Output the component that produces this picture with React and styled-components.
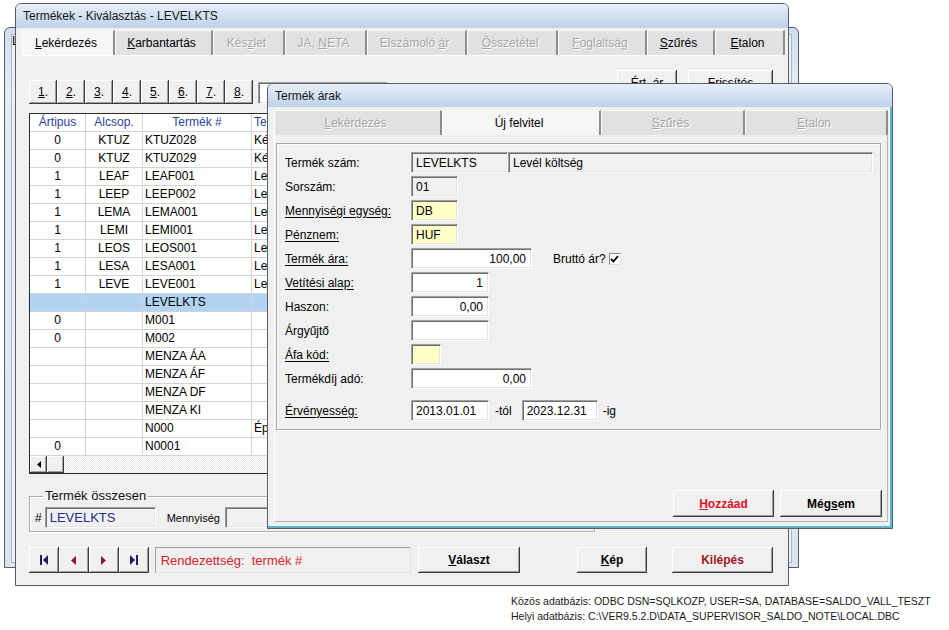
import React from "react";
import styled, { createGlobalStyle, css } from "styled-components";

const GlobalStyle = createGlobalStyle`
  html, body { margin: 0; padding: 0; background: #fff; }
  body { font-family: "Liberation Sans", Arial, sans-serif; font-size: 12px; color: #000; }
  * { box-sizing: border-box; }
`;

const raised = css`
  background: #f0f0f0;
  border: none;
  box-shadow: inset -1px -1px 0 #3c3c3c, inset 1px 1px 0 #fff, inset -2px -2px 0 #a0a0a0;
`;

const sunken = css`
  border: 1px solid;
  border-color: #a0a0a0 #fff #fff #a0a0a0;
  box-shadow: inset 1px 1px 0 #6e6e6e, inset -1px -1px 0 #e3e3e3;
`;

const Desktop = styled.div`
  position: relative;
  width: 949px;
  height: 630px;
  overflow: hidden;
  padding: 594px 0 0 511px;
`;

const Footer = styled.div`
  font-size: 10.5px;
  line-height: 15px;
  color: #1a1a1a;
  white-space: nowrap;
`;

const Win = styled.div`
  position: absolute;
  left: ${(p) => p.$x}px;
  top: ${(p) => p.$y}px;
  width: ${(p) => p.$w}px;
  height: ${(p) => p.$h}px;
  border: 1px solid #545e6c;
  border-radius: 6px 6px 0 0;
  background: #f0f0f0;
  display: flex;
  flex-direction: column;
  overflow: hidden;
  box-shadow: ${(p) => (p.$accent ? "inset -2px -2px 0 #5bb6cd" : "none")};
`;

const BackWin = styled(Win)`
  background: linear-gradient(#cfdeef, #e4ecf6 60px, #dbe5f1);
  padding: 6px 6px 4px 6px;
`;

const BackBody = styled.div`
  flex: 1;
  background: #f0f0f0;
  border: 1px solid #a9b7c9;
  overflow: hidden;
`;

const BackTab = styled.div`
  width: 4px;
  height: 20px;
  overflow: hidden;
  line-height: 12px;
  font-size: 12px;
`;

const Caption = styled.div`
  flex: none;
  height: ${(p) => p.$h}px;
  display: flex;
  align-items: center;
  padding-left: ${(p) => p.$pad}px;
  background: linear-gradient(#e7eff9, #bed2eb);
  font-size: 12px;
  color: #151515;
`;

const U = styled.span`
  text-decoration: underline;
`;

const TabStrip = styled.div`
  display: flex;
  height: 25px;
  flex: none;
`;

const Tab = styled.div`
  flex: none;
  width: ${(p) => p.$w}px;
  height: 100%;
  display: flex;
  align-items: center;
  justify-content: center;
  padding-right: 4px;
  background: ${(p) => (p.$active ? "#f6f6f6" : "#e1e1e1")};
  border-left: 1px solid #fff;
  border-right: 2px solid #8d8d8d;
  border-top: 1px solid #fafafa;
  color: ${(p) => (p.$off ? "#a6a6a6" : "#000")};
  text-shadow: ${(p) => (p.$off ? "1px 1px 0 #fff" : "none")};
  font-size: 12px;
  white-space: pre;
`;

/* ---------- main window ---------- */

const MainBody = styled.div`
  flex: 1;
  display: flex;
  flex-direction: column;
  padding: 2px 2px 0 6px;
`;

const MainPage = styled.div`
  flex: 1;
  display: flex;
  flex-direction: column;
  padding: 15px 13px 0 7px;
  box-shadow: inset 0 1px 0 #fff;
`;

const Toolbar = styled.div`
  display: flex;
  align-items: flex-start;
  height: 34px;
`;

const NumGroup = styled.div`
  display: flex;
  margin-top: 10px;
`;

const NumBtn = styled.div`
  ${raised};
  width: 28px;
  height: 24px;
  display: flex;
  align-items: center;
  justify-content: center;
`;

const SearchField = styled.div`
  ${sunken};
  width: 130px;
  height: 22px;
  margin: 12px 0 0 5px;
  background: #fff;
`;

const PushBtn = styled.div`
  ${raised};
  flex: none;
  width: ${(p) => p.$w}px;
  height: ${(p) => p.$h || 26}px;
  margin-left: ${(p) => p.$ml || "0px"};
  display: flex;
  align-items: center;
  justify-content: center;
  font-size: 12px;
  font-weight: ${(p) => (p.$bold ? 700 : 400)};
  color: ${(p) => p.$color || "#000"};
`;

const Table = styled.div`
  margin-top: 9px;
  border: 1px solid #2a2a2a;
  background: #fff;
  display: flex;
  flex-direction: column;
`;

const Row = styled.div`
  display: grid;
  grid-template-columns: 56px 57px 109px 1fr;
  height: 18px;
  background: ${(p) => (p.$sel ? "#b1d4f3" : "#fff")};
`;

const Cell = styled.div`
  border-right: 1px solid #d3d3d3;
  border-bottom: 1px solid #d3d3d3;
  padding: 0 2px;
  line-height: 17px;
  text-align: ${(p) => p.$align || "left"};
  color: ${(p) => (p.$head ? "#2b3f9e" : "#000")};
  white-space: nowrap;
  overflow: hidden;
`;

const HScroll = styled.div`
  display: flex;
  height: 17px;
`;

const ScrollBtn = styled.div`
  ${raised};
  width: 17px;
  height: 17px;
  display: flex;
  align-items: center;
  justify-content: center;
`;

const ScrollTrack = styled.div`
  flex: 1;
  background-color: #fff;
  background-image: repeating-conic-gradient(#e4e4e4 0 25%, #fff 0 50%);
  background-size: 2px 2px;
`;

const Group = styled.fieldset`
  margin: 15px 0 0;
  width: 566px;
  min-width: 0;
  padding: 4px 5px 3px;
  border: 1px solid #ababab;
  box-shadow: inset 1px 1px 0 #fff, 1px 1px 0 #fff;
  display: flex;
  align-items: center;

  legend {
    padding: 0 2px;
    margin-left: 8px;
    font-size: 13px;
    line-height: 14px;
    color: #111;
  }
`;

const Hash = styled.span`
  font-size: 12px;
  margin-right: 3px;
`;

const Small = styled.span`
  font-size: 11px;
  margin: 0 5px 0 11px;
`;

const Field = styled.div`
  ${sunken};
  flex: none;
  width: ${(p) => p.$w}px;
  height: 21px;
  background: ${(p) =>
    p.$tone === "yellow" ? "#ffffc6" : p.$tone === "gray" ? "#f1f1f1" : "#fff"};
  padding: 0 5px 0 4px;
  display: flex;
  align-items: center;
  justify-content: ${(p) => (p.$right ? "flex-end" : "flex-start")};
  font-size: ${(p) => p.$fs || 12}px;
  color: ${(p) => p.$color || "#000"};
  white-space: nowrap;
  overflow: hidden;
`;

const BottomBar = styled.div`
  display: flex;
  align-items: center;
  height: 26px;
  margin-top: 15px;
`;

const NavBtn = styled.div`
  ${raised};
  width: 30px;
  height: 26px;
  display: flex;
  align-items: center;
  justify-content: center;
`;

const Status = styled.div`
  border: 1px solid;
  border-color: #a0a0a0 #e2e2e2 #e2e2e2 #a0a0a0;
  width: 257px;
  height: 26px;
  margin-left: 6px;
  padding-left: 5px;
  display: flex;
  align-items: center;
  color: #d51f2a;
  font-size: 13px;
  white-space: pre;
`;

/* ---------- dialog ---------- */

const DlgBody = styled.div`
  flex: 1;
  display: flex;
  flex-direction: column;
  padding: 3px 4px 6px 6px;
`;

const DlgPage = styled.div`
  flex: 1;
  display: flex;
  flex-direction: column;
  padding: 8px 5px 4px 2px;
  border-right: 1px solid #b6b6b6;
  border-bottom: 1px solid #b6b6b6;
  box-shadow: inset 1px 0 0 #fff;
`;

const FormBox = styled.div`
  width: 605px;
  border: 1px solid #a6a6a6;
  box-shadow: inset 1px 1px 0 #fff, 1px 1px 0 #fff;
  padding: 8px 0 8px 8px;
  display: flex;
  flex-direction: column;
  gap: 3px;
`;

const FormRow = styled.div`
  display: flex;
  align-items: center;
  height: 21px;
  margin-top: ${(p) => p.$mt || 0}px;
`;

const FLabel = styled.span`
  flex: none;
  width: 126px;
  font-size: 12px;
  text-decoration: ${(p) => (p.$ul ? "underline" : "none")};
  text-underline-offset: 2px;
`;

const Side = styled.span`
  font-size: 12px;
  margin: ${(p) => p.$m};
`;

const Check = styled.span`
  width: 12px;
  height: 12px;
  margin-left: 3px;
  background: #fff;
  border: 1px solid;
  border-color: #8a8a8a #e0e0e0 #e0e0e0 #8a8a8a;
  display: flex;
  align-items: center;
  justify-content: center;
`;

const DlgButtons = styled.div`
  display: flex;
  justify-content: flex-end;
  gap: 6px;
  margin-top: 60px;
`;

/* ---------- data ---------- */

const mainTabs = [
  ["", "L", "ekérdezés", 93, true, false],
  ["", "K", "arbantartás", 98, false, false],
  ["Kés", "z", "let", 72, false, true],
  ["JA, ", "N", "ETA", 82, false, true],
  ["Elszámoló ", "á", "r", 100, false, true],
  ["", "Ö", "sszetétel", 91, false, true],
  ["", "F", "oglaltság", 89, false, true],
  ["", "S", "zűrés", 68, false, false],
  ["", "E", "talon", 70, false, false],
];

const dlgTabs = [
  ["", "L", "ekérdezés", 168, false, true],
  ["", "", "Új felvitel", 159, true, false],
  ["", "S", "zűrés", 144, false, true],
  ["", "E", "talon", 143, false, true],
];

// the name column lies under the dialog, only its first letters show
const rows = [
  ["0", "KTUZ", "KTUZ028", "Kézi"],
  ["0", "KTUZ", "KTUZ029", "Kézi"],
  ["1", "LEAF", "LEAF001", "Lev."],
  ["1", "LEEP", "LEEP002", "Lev."],
  ["1", "LEMA", "LEMA001", "Lev."],
  ["1", "LEMI", "LEMI001", "Lev."],
  ["1", "LEOS", "LEOS001", "Lev."],
  ["1", "LESA", "LESA001", "Lev."],
  ["1", "LEVE", "LEVE001", "Lev."],
  ["", "", "LEVELKTS", "", true],
  ["0", "", "M001", ""],
  ["0", "", "M002", ""],
  ["", "", "MENZA ÁA", ""],
  ["", "", "MENZA ÁF", ""],
  ["", "", "MENZA DF", ""],
  ["", "", "MENZA KI", ""],
  ["", "", "N000", "Épít"],
  ["0", "", "N0001", ""],
];

const renderTabs = (tabs) =>
  tabs.map(([pre, k, post, w, active, off]) => (
    <Tab key={pre + k + post} $w={w} $active={active} $off={off}>
      {pre}
      {k && <U>{k}</U>}
      {post}
    </Tab>
  ));

const NAVY = "#221d66";
const WINE = "#921427";

const FirstIcon = () => (
  <svg width="8" height="10" viewBox="0 0 8 10">
    <rect x="0" y="0" width="2" height="10" fill={NAVY} />
    <path d="M8 0 L3 5 L8 10Z" fill={NAVY} />
  </svg>
);
const PrevIcon = () => (
  <svg width="5" height="9" viewBox="0 0 5 9">
    <path d="M5 0 L0 4.5 L5 9Z" fill={WINE} />
  </svg>
);
const NextIcon = () => (
  <svg width="5" height="9" viewBox="0 0 5 9">
    <path d="M0 0 L5 4.5 L0 9Z" fill={WINE} />
  </svg>
);
const LastIcon = () => (
  <svg width="8" height="10" viewBox="0 0 8 10">
    <path d="M0 0 L5 5 L0 10Z" fill={NAVY} />
    <rect x="6" y="0" width="2" height="10" fill={NAVY} />
  </svg>
);

export default function App() {
  return (
    <>
      <GlobalStyle />
      <Desktop>
        <BackWin $x={4} $y={27} $w={795} $h={541}>
          <BackBody>
            <BackTab>L</BackTab>
          </BackBody>
        </BackWin>

        <Win $x={15} $y={3} $w={774} $h={583}>
          <Caption $h={24} $pad={7}>Termékek - Kiválasztás - LEVELKTS</Caption>
          <MainBody>
            <TabStrip>{renderTabs(mainTabs)}</TabStrip>
            <MainPage>
              <Toolbar>
                <NumGroup>
                  {[1, 2, 3, 4, 5, 6, 7, 8].map((n) => (
                    <NumBtn key={n}>
                      <U>{n}</U>.
                    </NumBtn>
                  ))}
                </NumGroup>
                <SearchField />
                <PushBtn $w={60} $ml="auto">
                  Ért. ár
                </PushBtn>
                <PushBtn $w={85} $ml="11px">
                  Frissítés
                </PushBtn>
              </Toolbar>

              <Table>
                <Row>
                  <Cell $head $align="center">Ártipus</Cell>
                  <Cell $head $align="center">Alcsop.</Cell>
                  <Cell $head $align="center">Termék #</Cell>
                  <Cell $head>Termék neve</Cell>
                </Row>
                {rows.map((r, i) => (
                  <Row key={i} $sel={r[4]}>
                    <Cell $align="center">{r[0]}</Cell>
                    <Cell $align="center">{r[1]}</Cell>
                    <Cell>{r[2]}</Cell>
                    <Cell>{r[3]}</Cell>
                  </Row>
                ))}
                <HScroll>
                  <ScrollBtn>
                    <svg width="4" height="7" viewBox="0 0 4 7">
                      <path d="M4 0 L0 3.5 L4 7Z" fill="#000" />
                    </svg>
                  </ScrollBtn>
                  <ScrollBtn />
                  <ScrollTrack />
                </HScroll>
              </Table>

              <Group>
                <legend>Termék összesen</legend>
                <Hash>#</Hash>
                <Field $w={111} $tone="gray" $color="#1d2b8f" $fs={13}>
                  LEVELKTS
                </Field>
                <Small>Mennyiség</Small>
                <Field $w={130} $tone="gray" />
              </Group>

              <BottomBar>
                <NavBtn><FirstIcon /></NavBtn>
                <NavBtn><PrevIcon /></NavBtn>
                <NavBtn><NextIcon /></NavBtn>
                <NavBtn><LastIcon /></NavBtn>
                <Status>Rendezettség:  termék #</Status>
                <PushBtn $w={102} $ml="7px" $bold>
                  <U>V</U>álaszt
                </PushBtn>
                <PushBtn $w={70} $ml="57px" $bold>
                  <U>K</U>ép
                </PushBtn>
                <PushBtn $w={101} $ml="25px" $bold $color="#a5161f">
                  Kilépés
                </PushBtn>
              </BottomBar>
            </MainPage>
          </MainBody>
        </Win>

        <Win $x={267} $y={83} $w={626} $h={446} $accent>
          <Caption $h={23} $pad={7}>Termék árak</Caption>
          <DlgBody>
            <TabStrip>{renderTabs(dlgTabs)}</TabStrip>
            <DlgPage>
              <FormBox>
                <FormRow>
                  <FLabel>Termék szám:</FLabel>
                  <Field $w={97} $tone="gray">LEVELKTS</Field>
                  <Field $w={365} $tone="gray">Levél költség</Field>
                </FormRow>
                <FormRow>
                  <FLabel>Sorszám:</FLabel>
                  <Field $w={47} $tone="gray">01</Field>
                </FormRow>
                <FormRow>
                  <FLabel $ul>Mennyiségi egység:</FLabel>
                  <Field $w={47} $tone="yellow">DB</Field>
                </FormRow>
                <FormRow>
                  <FLabel $ul>Pénznem:</FLabel>
                  <Field $w={47} $tone="yellow">HUF</Field>
                </FormRow>
                <FormRow>
                  <FLabel $ul>Termék ára:</FLabel>
                  <Field $w={121} $right>100,00</Field>
                  <Side $m="0 0 0 21px">Bruttó ár?</Side>
                  <Check>
                    <svg width="9" height="8" viewBox="0 0 9 8">
                      <path d="M1 4 L3.5 6.5 L8 1" stroke="#000" strokeWidth="1.8" fill="none" />
                    </svg>
                  </Check>
                </FormRow>
                <FormRow>
                  <FLabel $ul>Vetítési alap:</FLabel>
                  <Field $w={78} $right>1</Field>
                </FormRow>
                <FormRow>
                  <FLabel>Haszon:</FLabel>
                  <Field $w={78} $right>0,00</Field>
                </FormRow>
                <FormRow>
                  <FLabel>Árgyűjtő</FLabel>
                  <Field $w={78} />
                </FormRow>
                <FormRow>
                  <FLabel $ul>Áfa kód:</FLabel>
                  <Field $w={30} $tone="yellow" />
                </FormRow>
                <FormRow>
                  <FLabel>Termékdíj adó:</FLabel>
                  <Field $w={121} $right>0,00</Field>
                </FormRow>
                <FormRow $mt={8}>
                  <FLabel $ul>Érvényesség:</FLabel>
                  <Field $w={78}>2013.01.01</Field>
                  <Side $m="0 10px 0 6px">-tól</Side>
                  <Field $w={76}>2023.12.31</Field>
                  <Side $m="0 0 0 5px">-ig</Side>
                </FormRow>
              </FormBox>
              <DlgButtons>
                <PushBtn $w={101} $h={27} $bold $color="#e0141e">
                  <U>H</U>ozzáad
                </PushBtn>
                <PushBtn $w={102} $h={27} $bold>
                  Még<U>s</U>em
                </PushBtn>
              </DlgButtons>
            </DlgPage>
          </DlgBody>
        </Win>

        <Footer>
          <div>Közös adatbázis: ODBC DSN=SQLKOZP, USER=SA, DATABASE=SALDO_VALL_TESZT</div>
          <div>Helyi adatbázis: C:\VER9.5.2.D\DATA_SUPERVISOR_SALDO_NOTE\LOCAL.DBC</div>
        </Footer>
      </Desktop>
    </>
  );
}
